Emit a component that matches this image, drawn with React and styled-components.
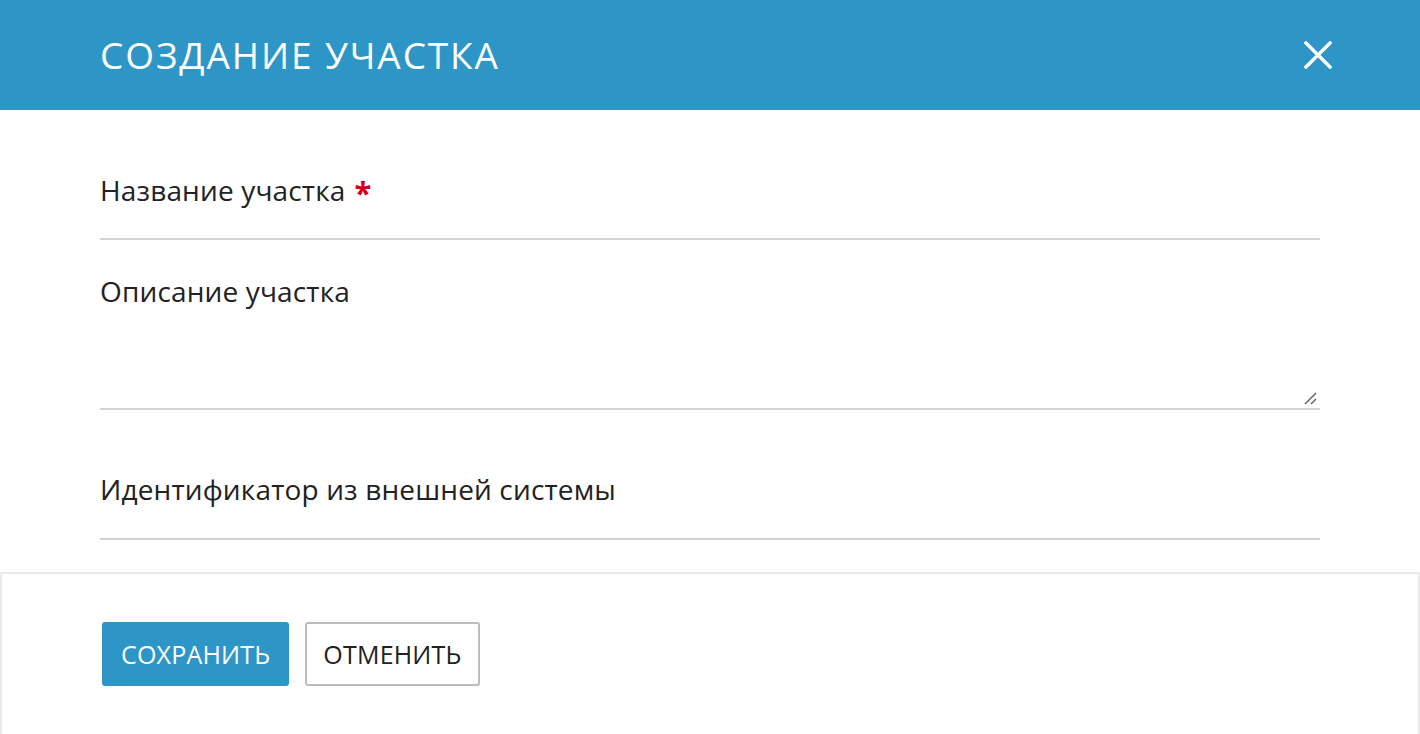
import React from "react";
import styled, { createGlobalStyle } from "styled-components";

const Global = createGlobalStyle`
  html, body { margin: 0; padding: 0; background: #fff; }
  body { font-family: "Open Sans", "Noto Sans", "DejaVu Sans", sans-serif; color: #222; }
  * { box-sizing: border-box; }
`;

const Page = styled.div`
  width: 1420px;
  height: 734px;
  overflow: hidden;
  display: flex;
  flex-direction: column;
  background: #fff;
`;

const Header = styled.header`
  height: 110px;
  flex: none;
  background: #2d96c7;
  display: flex;
  align-items: center;
  justify-content: space-between;
  padding: 0 85px 0 100px;
`;

const Title = styled.h1`
  margin: 0;
  font-size: 37px;
  font-weight: 400;
  letter-spacing: 1.9px;
  color: #fff;
  line-height: 1;
  position: relative;
  top: -1px;
`;

const CloseButton = styled.button`
  width: 34px;
  height: 34px;
  padding: 0;
  border: none;
  background: transparent;
  display: flex;
  align-items: center;
  justify-content: center;
  cursor: pointer;
`;

const Form = styled.div`
  padding: 0 100px;
  display: flex;
  flex-direction: column;
`;

const Field = styled.div`
  display: flex;
  flex-direction: column;
  margin-top: ${(p) => p.$top}px;
  border-bottom: 2px solid #d2d2d2;
  position: relative;
`;

const Label = styled.label`
  font-size: 28px;
  line-height: 32px;
  letter-spacing: 0.15px;
  color: #222;
  display: flex;
  align-items: center;
`;

const Required = styled.span`
  color: #d0021b;
  margin-left: 9px;
  font-size: 31px;
  font-weight: 700;
  line-height: 32px;
  position: relative;
  top: 2px;
`;

const Input = styled.div`
  height: ${(p) => p.$h}px;
`;

const Resizer = styled.svg`
  position: absolute;
  right: 2px;
  bottom: 2px;
`;

const Footer = styled.footer`
  margin-top: 32px;
  flex: 1;
  border: 2px solid #eaeaea;
  border-bottom: none;
  padding: 48px 100px 0 100px;
  display: flex;
  gap: 16px;
  align-items: flex-start;
`;

const Button = styled.button`
  height: 64px;
  padding: 0 ${(p) => (p.$primary ? 17 : 16)}px;
  border-radius: 3px;
  font-family: inherit;
  font-size: 25px;
  letter-spacing: 0.2px;
  font-weight: 400;
  text-transform: uppercase;
  background: ${(p) => (p.$primary ? "#2d96c7" : "#fff")};
  color: ${(p) => (p.$primary ? "#fff" : "#222")};
  border: 2px solid ${(p) => (p.$primary ? "#2d96c7" : "#bcbcbc")};
  cursor: pointer;
`;

export default function App() {
  return (
    <Page>
      <Global />
      <Header>
        <Title>СОЗДАНИЕ УЧАСТКА</Title>
        <CloseButton aria-label="close">
          <svg width="28" height="28" viewBox="0 0 28 28">
            <path d="M2 2 L26 26 M26 2 L2 26" stroke="#fff" strokeWidth="3.4" strokeLinecap="square" />
          </svg>
        </CloseButton>
      </Header>
      <Form>
        <Field $top={64}>
          <Label>
            Название участка<Required>*</Required>
          </Label>
          <Input $h={32} />
        </Field>
        <Field $top={35}>
          <Label>Описание участка</Label>
          <Input $h={101} />
          <Resizer width="16" height="16" viewBox="0 0 16 16">
            <path d="M3 14 L14 3 M9 14 L14 9" stroke="#666" strokeWidth="1.5" />
          </Resizer>
        </Field>
        <Field $top={63}>
          <Label>Идентификатор из внешней системы</Label>
          <Input $h={33} />
        </Field>
      </Form>
      <Footer>
        <Button $primary>Сохранить</Button>
        <Button>Отменить</Button>
      </Footer>
    </Page>
  );
}
